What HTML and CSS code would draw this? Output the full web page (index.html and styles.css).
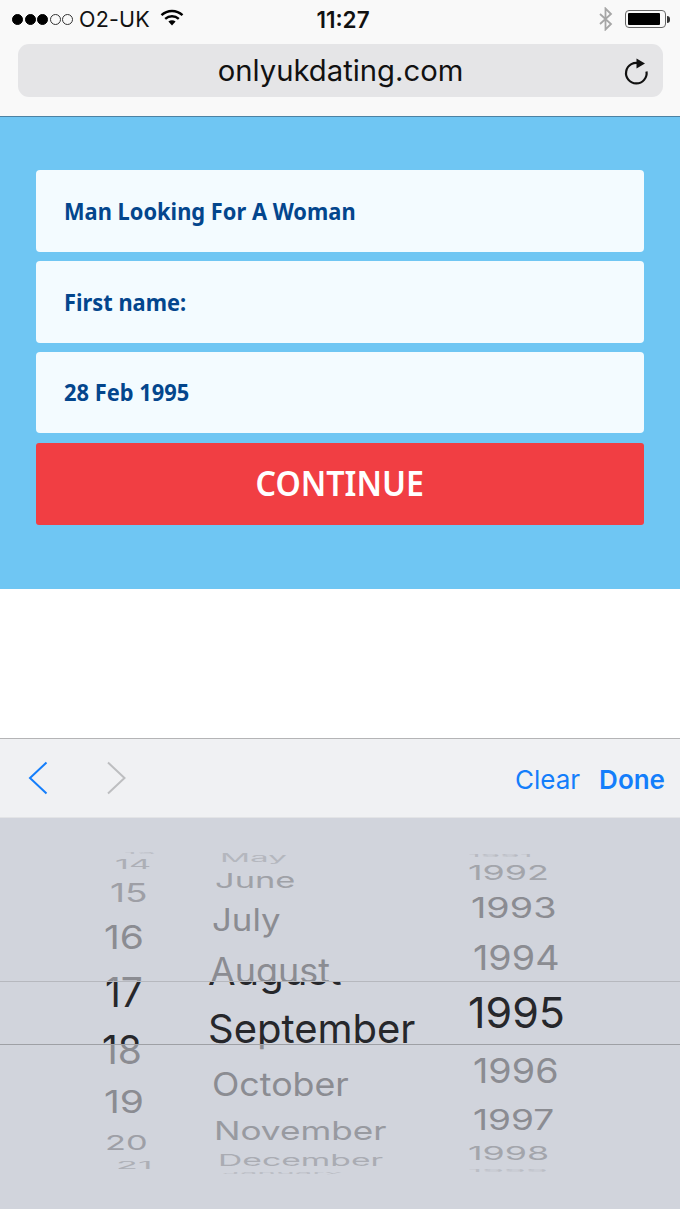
FILE: index.html
```html
<!DOCTYPE html>
<html lang="en">
<head>
<meta charset="utf-8">
<title>onlyukdating.com</title>
<link rel="stylesheet" href="styles.css">
</head>
<body>
<div class="screen">
  <header class="chrome">
    <div class="status">
      <div class="status-left">
        <span class="dots"><i class="dot on"></i><i class="dot on"></i><i class="dot on"></i><i class="dot"></i><i class="dot"></i></span>
        <span class="carrier">O2-UK</span>
        <svg class="wifi" width="24" height="17" viewBox="0 0 24 17"><path d="M1.500 6.200C7.400.6 16.600.6 22.500 6.200" fill="none" stroke="#000" stroke-width="2.400"/><path d="M5.200 9.800c3.900-3.500 9.700-3.500 13.600 0" fill="none" stroke="#000" stroke-width="2.400"/><path d="M8.400 12.600c2.100-1.700 5.100-1.700 7.200 0L12 16.500z" fill="#000"/></svg>
      </div>
      <span class="time">11:27</span>
      <div class="status-right">
        <svg class="bt" width="16" height="24" viewBox="0 0 16 24"><path d="M2 7l11 10-5.500 5.500v-21L13 7 2 17" fill="none" stroke="#a6a6a6" stroke-width="1.800"/></svg>
        <span class="battery"><span class="battery-fill"></span></span><span class="battery-tip"></span>
      </div>
    </div>
    <div class="urlbar">
      <span class="url">onlyukdating.com</span>
      <svg class="reload" width="28" height="30" viewBox="0 0 28 30"><path d="M18 7.500A10.300 10.300 0 1 0 24.500 15.500" fill="none" stroke="#111" stroke-width="2.200"/><path d="M14.500 2.500l8.500 5-8.500 5z" fill="#111"/></svg>
    </div>
  </header>

  <main class="hero">
    <div class="field"><span>Man Looking For A Woman</span></div>
    <div class="field"><span>First name:</span></div>
    <div class="field"><span>28 Feb 1995</span></div>
    <button class="cta" type="button"><span>CONTINUE</span></button>
  </main>

  <div class="spacer"></div>

  <div class="toolbar">
    <svg class="chev" width="22" height="34" viewBox="0 0 22 34"><path d="M19.500 1.500L3 17l16.500 15.500" fill="none" stroke="#147efb" stroke-width="2"/></svg>
    <svg class="chev next" width="22" height="34" viewBox="0 0 22 34"><path d="M3 1.500L19.500 17 3 32.500" fill="none" stroke="#bdbec0" stroke-width="2"/></svg>
    <span class="clear">Clear</span>
    <span class="done">Done</span>
  </div>

  <div class="wheel">
    <div class="col days">
      <div class="it"><span>13</span></div><div class="it"><span>14</span></div><div class="it"><span>15</span></div><div class="it"><span>16</span></div><div class="it"><span>17</span></div><div class="it"><span>18</span></div><div class="it"><span>19</span></div><div class="it"><span>20</span></div><div class="it"><span>21</span></div>
    </div>
    <div class="col months">
      <div class="it"><span>May</span></div><div class="it"><span>June</span></div><div class="it"><span>July</span></div><div class="it"><span>August</span></div><div class="it"><span>September</span></div><div class="it"><span>October</span></div><div class="it"><span>November</span></div><div class="it"><span>December</span></div><div class="it"><span>January</span></div>
    </div>
    <div class="col years">
      <div class="it"><span>1991</span></div><div class="it"><span>1992</span></div><div class="it"><span>1993</span></div><div class="it"><span>1994</span></div><div class="it"><span>1995</span></div><div class="it"><span>1996</span></div><div class="it"><span>1997</span></div><div class="it"><span>1998</span></div><div class="it"><span>1999</span></div>
    </div>
    <div class="band" aria-hidden="true">
      <div class="col band-days">
        <div class="it"><span>17</span></div><div class="it"><span>18</span></div>
      </div>
      <div class="col band-months">
        <div class="it"><span>August</span></div><div class="it"><span>September</span></div>
      </div>
      <div class="col band-years">
        <div class="it"><span>1995</span></div>
      </div>
    </div>
  </div>
</div>
</body>
</html>
```
FILE: styles.css
```css
* { box-sizing: border-box; }
html, body { margin: 0; padding: 0; }
body { width: 680px; height: 1209px; overflow: hidden; background: #fff; font-family: Inter, "Liberation Sans", sans-serif; }
.screen { display: flex; flex-direction: column; height: 1209px; }

.chrome { height: 117px; flex: none; background: #f9f9f9; border-bottom: 1px solid #4d82a3; padding: 0 17px 0 18px; }
.status { height: 44px; margin: 0 -17px 0 -18px; padding: 0 10px 6px 12px; display: grid; grid-template-columns: 1fr auto 1fr; align-items: center; }
.status-left { display: flex; align-items: center; }
.dots { display: flex; gap: 1.500px; margin-right: 6px; }
.dot { width: 11px; height: 11px; border-radius: 50%; border: 1px solid #333; }
.dot.on { background: #000; border-color: #000; }
.carrier { font-size: 21.500px; color: #111; letter-spacing: .2px; }
.wifi { margin-left: 10px; margin-top: -3px; }
.time { font-size: 22.500px; font-weight: 600; color: #111; margin-left: 4px; }
.status-right { display: flex; align-items: center; justify-content: flex-end; }
.bt { margin-right: 11px; }
.battery { width: 41px; height: 18px; border: 1px solid #666; border-radius: 4px; padding: 2px; display: block; }
.battery-fill { display: block; width: 32px; height: 12px; background: #000; border-radius: 1px; }
.battery-tip { width: 3px; height: 7px; background: #333; border-radius: 0 3px 3px 0; margin-left: 1px; }

.urlbar { height: 53px; background: #e5e5e7; border-radius: 11px; display: flex; align-items: center; justify-content: center; position: relative; }
.url { font-size: 29.250px; color: #111; }
.reload { position: absolute; right: 13px; top: 12px; }

.hero { height: 472px; flex: none; background: #6fc6f3; padding: 53px 36px 0; display: flex; flex-direction: column; gap: 9px; }
.field { height: 82px; flex: none; background: #f3fbff; border-radius: 4px; padding: 0 0 2px 27.500px; display: flex; align-items: center; font-family: "Noto Sans", sans-serif; font-weight: 700; font-size: 24px; color: #03468d; white-space: nowrap; }
.field:nth-child(3) { height: 81px; }
.field span { display: block; transform: scaleX(.91); transform-origin: left center; }
.cta { height: 82px; flex: none; border: 0; margin-top: 1px; padding: 0 0 3px; background: #f13e43; border-radius: 3px; color: #fff; font-family: "Noto Sans", sans-serif; font-weight: 600; font-size: 33.500px; }
.cta span { display: inline-block; transform: scaleX(.96); }

.spacer { height: 150px; flex: none; background: #fff; border-bottom: 1px solid #b4b4b6; }

.toolbar { height: 79px; flex: none; background: #f0f1f3; border-bottom: 1px solid #e3e4e6; display: flex; align-items: center; padding: 0 15px 0 27px; }
.chev { flex: none; }
.next { margin-left: 56px; margin-right: auto; }
.clear { font-size: 26px; color: #147efb; margin: 2px 19px 0 0; }
.done { font-size: 26px; font-weight: 600; color: #147efb; margin-top: 2px; }

.wheel { flex: 1; background: #d1d4dc; position: relative; color: #8b8c92; overflow: hidden; }
.col { position: absolute; top: 0; display: flex; flex-direction: column; white-space: nowrap; }
/* Each row is a zero-height line; its margin-top is the distance between row centres on the wheel */
.it { display: flex; align-items: center; flex: none; height: 0; }
.it span { display: block; transform-origin: left center; }

/* Day column */
.days { left: 100px; font-size: 39px; }
.days .it:nth-child(1) { margin-top: 35px; padding-left: 24px; opacity: .3; }
.days .it:nth-child(1) span { transform: scale(.8, .06); }
.days .it:nth-child(2) { margin-top: 10px; padding-left: 15px; opacity: .5; }
.days .it:nth-child(2) span { transform: scale(.88, .35); }
.days .it:nth-child(3) { margin-top: 29px; padding-left: 10px; opacity: .72; }
.days .it:nth-child(3) span { transform: scale(.95, .67); }
.days .it:nth-child(4) { margin-top: 44px; padding-left: 4px; }
.days .it:nth-child(4) span { transform: scale(1, .85); }
.days .it:nth-child(5) { margin-top: 55px; padding-left: 5px; }
.days .it:nth-child(6) { margin-top: 58px; padding-left: 2px; }
.days .it:nth-child(7) { margin-top: 52px; padding-left: 4px; }
.days .it:nth-child(7) span { transform: scale(1, .8); }
.days .it:nth-child(8) { margin-top: 41px; padding-left: 5px; opacity: .72; }
.days .it:nth-child(8) span { transform: scale(.88, .53); }
.days .it:nth-child(9) { margin-top: 23px; padding-left: 16px; opacity: .5; }
.days .it:nth-child(9) span { transform: scale(.92, .25); }

/* Month column */
.months { left: 208px; font-size: 37px; }
.months .it:nth-child(1) { margin-top: 39px; padding-left: 12px; opacity: .4; }
.months .it:nth-child(1) span { transform: scale(.9, .3); }
.months .it:nth-child(2) { margin-top: 23px; padding-left: 7px; opacity: .7; }
.months .it:nth-child(2) span { transform: scale(.93, .56); }
.months .it:nth-child(3) { margin-top: 39px; padding-left: 4px; }
.months .it:nth-child(3) span { transform: scale(.94, .84); }
.months .it:nth-child(4) { margin-top: 51px; padding-left: 2px; }
.months .it:nth-child(4) span { transform: scale(.97, .94); }
.months .it:nth-child(5) { margin-top: 58px; }
.months .it:nth-child(5) span { transform: scale(1.08, 1); }
.months .it:nth-child(6) { margin-top: 56px; padding-left: 4px; }
.months .it:nth-child(6) span { transform: scale(.967, .88); }
.months .it:nth-child(7) { margin-top: 46px; padding-left: 6px; opacity: .8; }
.months .it:nth-child(7) span { transform: scale(.95, .68); }
.months .it:nth-child(8) { margin-top: 30px; padding-left: 10px; opacity: .55; }
.months .it:nth-child(8) span { transform: scale(.91, .42); }
.months .it:nth-child(9) { margin-top: 13px; padding-left: 14px; opacity: .3; }
.months .it:nth-child(9) span { transform: scale(.85, .07); }

/* Year column */
.years { left: 468px; font-size: 37px; }
.years .it:nth-child(1) { margin-top: 37px; opacity: .35; }
.years .it:nth-child(1) span { transform: scale(.85, .1); }
.years .it:nth-child(2) { margin-top: 17px; opacity: .65; }
.years .it:nth-child(2) span { transform: scale(.97, .55); }
.years .it:nth-child(3) { margin-top: 35px; padding-left: 3px; }
.years .it:nth-child(3) span { transform: scale(1.02, .75); }
.years .it:nth-child(4) { margin-top: 50px; padding-left: 5px; }
.years .it:nth-child(4) span { transform: scale(1.02, .92); }
.years .it:nth-child(5) { margin-top: 57px; }
.years .it:nth-child(6) { margin-top: 56px; padding-left: 5px; }
.years .it:nth-child(6) span { transform: scale(1.02, .92); }
.years .it:nth-child(7) { margin-top: 49px; padding-left: 5px; }
.years .it:nth-child(7) span { transform: scale(1, .75); }
.years .it:nth-child(8) { margin-top: 34px; opacity: .65; }
.years .it:nth-child(8) span { transform: scale(.97, .5); }
.years .it:nth-child(9) { margin-top: 17px; opacity: .3; }
.years .it:nth-child(9) span { transform: scale(.95, .08); }

/* Selection band: opaque strip with the dark copies of the rows */
.band { position: absolute; left: 0; right: 0; top: 163px; height: 64px; background: #d1d4dc; border-top: 1px solid #b6b8be; border-bottom: 1px solid #9ea0a5; overflow: hidden; color: #26272b; }
.band-days { left: 100px; font-size: 39px; }
.band-days .it:nth-child(1) { margin-top: 10px; padding-left: 5px; }
.band-days .it:nth-child(2) { margin-top: 57px; padding-left: 2px; }
.band-months { left: 208px; font-size: 40px; top: -12px; }
.band-months .it:nth-child(2) { margin-top: 58px; }
.band-years { left: 468px; font-size: 43px; }
.band-years .it { margin-top: 30px; }
```
